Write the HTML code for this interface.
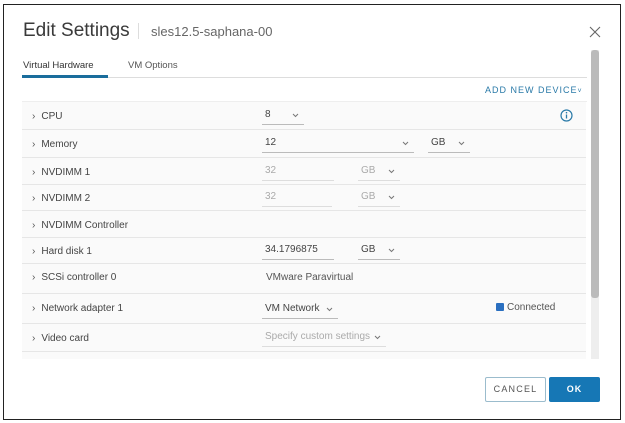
<!DOCTYPE html>
<html><head><style>
*{margin:0;padding:0;box-sizing:border-box}
body{width:625px;height:423px;background:#fff;font-family:"Liberation Sans",sans-serif;position:relative;overflow:hidden;color:#333}
.a{position:absolute;white-space:nowrap}
.frame{left:3px;top:4px;width:618px;height:416px;border:1.5px solid #222}
.row{position:absolute;left:22px;width:564px;border-bottom:1px solid #e6e6e6;background:#fafafa}
.lbl{position:absolute;left:10px;font-size:10px;color:#444}
.lbl:before{content:"›";margin-right:6px;color:#555}
.f{position:absolute;font-size:10px;color:#444;border-bottom:1px solid #bbb;height:17px;padding-left:3px;padding-top:1px}
.dis{color:#aaa;border-color:#ddd}
.ch{position:absolute;right:5px;top:5px;width:7px;height:5px}
</style></head><body>
<svg width="0" height="0" style="position:absolute"><symbol id="cv" viewBox="0 0 7 5"><path d="M1 1L3.5 3.5L6 1" fill="none" stroke="#777" stroke-width="1"/></symbol></svg>
<div class="a frame"></div>
<div class="a" style="left:23px;top:20px;font-size:19px;color:#3a3a3a;font-weight:300">Edit Settings</div>
<div class="a" style="left:138px;top:23px;width:1px;height:16px;background:#ddd"></div>
<div class="a" style="left:151px;top:24px;font-size:13px;color:#666">sles12.5-saphana-00</div>
<svg class="a" style="left:589px;top:26px" width="12" height="12"><path d="M1 1L11 11M11 1L1 11" stroke="#666" stroke-width="1.1"/></svg>
<div class="a" style="left:23px;top:60px;font-size:9.5px;color:#333">Virtual Hardware</div>
<div class="a" style="left:128px;top:60px;font-size:9.5px;color:#555">VM Options</div>
<div class="a" style="left:22px;top:77px;width:565px;height:1px;background:#ddd"></div>
<div class="a" style="left:22px;top:75px;width:86px;height:3px;background:#1a6d9c"></div>
<div class="a" style="left:485px;top:85px;font-size:9px;letter-spacing:1px;color:#2a7aa8">ADD NEW DEVICE<span style="font-size:7px">˅</span></div>
<div class="a" style="left:22px;top:101px;width:565px;height:1px;background:#eee"></div>
<div class="a" style="left:591px;top:50px;width:8px;height:309px;background:#eee"></div>
<div class="a" style="left:591px;top:50px;width:8px;height:248px;background:#bbb;border-radius:3px"></div>

<div class="row" style="top:102px;height:28px"><span class="lbl" style="top:9px">CPU</span>
<div class="f" style="left:240px;top:6px;width:42px">8<svg class="ch"><use href="#cv"/></svg></div>
<svg class="a" style="left:538px;top:7px" width="13" height="13"><circle cx="6.5" cy="6.5" r="5.5" fill="none" stroke="#2a7aa8" stroke-width="1.2"/><line x1="6.5" y1="5.5" x2="6.5" y2="9.5" stroke="#2a7aa8" stroke-width="1.3"/><circle cx="6.5" cy="3.7" r=".8" fill="#2a7aa8"/></svg></div>
<div class="row" style="top:130px;height:28px"><span class="lbl" style="top:9px">Memory</span>
<div class="f" style="left:240px;top:6px;width:152px">12<svg class="ch"><use href="#cv"/></svg></div>
<div class="f" style="left:406px;top:6px;width:42px">GB<svg class="ch"><use href="#cv"/></svg></div></div>
<div class="row" style="top:158px;height:27px"><span class="lbl" style="top:9px">NVDIMM 1</span>
<div class="f dis" style="left:240px;top:6px;width:72px">32</div>
<div class="f dis" style="left:336px;top:6px;width:42px">GB<svg class="ch"><use href="#cv"/></svg></div></div>
<div class="row" style="top:185px;height:26px"><span class="lbl" style="top:8px">NVDIMM 2</span>
<div class="f dis" style="left:240px;top:5px;width:70px">32</div>
<div class="f dis" style="left:336px;top:5px;width:42px">GB<svg class="ch"><use href="#cv"/></svg></div></div>
<div class="row" style="top:211px;height:27px"><span class="lbl" style="top:9px">NVDIMM Controller</span></div>
<div class="row" style="top:238px;height:26px"><span class="lbl" style="top:8px">Hard disk 1</span>
<div class="f" style="left:240px;top:5px;width:72px">34.1796875</div>
<div class="f" style="left:336px;top:5px;width:42px">GB<svg class="ch"><use href="#cv"/></svg></div></div>
<div class="row" style="top:264px;height:30px"><span class="lbl" style="top:8px">SCSi controller 0</span>
<span class="a" style="left:244px;top:8px;font-size:10px;color:#555">VMware Paravirtual</span></div>
<div class="row" style="top:294px;height:30px"><span class="lbl" style="top:9px">Network adapter 1</span>
<div class="f" style="left:240px;top:8px;width:76px">VM Network<svg class="ch"><use href="#cv"/></svg></div>
<span class="a" style="left:474px;top:8px;font-size:10px;color:#555"><span style="display:inline-block;width:8px;height:8px;background:#2a6fc0;border-radius:1px;margin-right:3px;vertical-align:-1px"></span>Connected</span></div>
<div class="row" style="top:324px;height:28px"><span class="lbl" style="top:9px">Video card</span>
<div class="f dis" style="left:240px;top:6px;width:124px">Specify custom settings<svg class="ch"><use href="#cv"/></svg></div></div>
<div class="row" style="top:352px;height:7px;border:none"></div>

<div class="a" style="left:485px;top:377px;width:61px;height:25px;border:1px solid #9bbccd;border-radius:2px;font-size:9px;letter-spacing:1.2px;color:#555;text-align:center;line-height:23px">CANCEL</div>
<div class="a" style="left:549px;top:377px;width:51px;height:25px;background:#1677b5;border-radius:2px;font-size:9px;letter-spacing:1px;color:#fff;text-align:center;line-height:25px;font-weight:bold">OK</div>
</body></html>
